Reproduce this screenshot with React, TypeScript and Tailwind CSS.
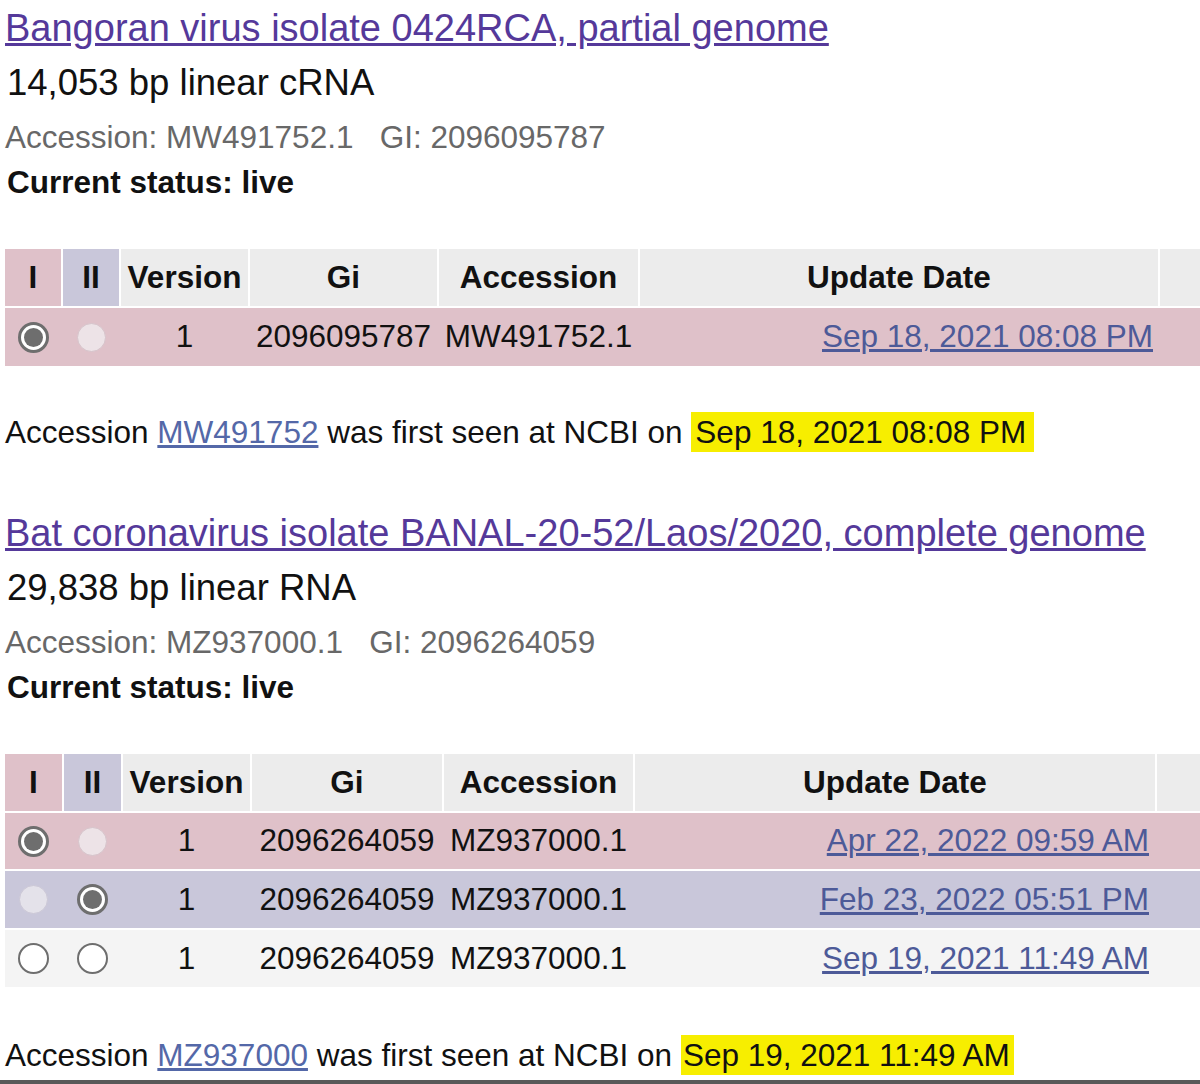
import React from "react";

type RadioKind = "on" | "off" | "dim" | "dimBlue";

const Radio = ({ kind }: { kind: RadioKind }) => {
    if (kind === "on") {
        return (
            <span className="w-[31px] h-[31px] rounded-full border-[3px] border-[#6e6e6e] bg-white flex items-center justify-center">
                <span className="w-[19px] h-[19px] rounded-full bg-[#6e6e6e]" />
            </span>
        );
    }
    if (kind === "dim") {
        return <span className="w-[29px] h-[29px] rounded-full bg-[#ede3e7] border border-[#d6c3ca]" />;
    }
    if (kind === "dimBlue") {
        return <span className="w-[29px] h-[29px] rounded-full bg-[#e4e2ea] border border-[#cbc7d6]" />;
    }
    return <span className="w-[31px] h-[31px] rounded-full border-2 border-[#6e6e6e] bg-white" />;
};

type Row = {
    bg: string;
    r1: RadioKind;
    r2: RadioKind;
    gi: string;
    acc: string;
    date: string;
    h: string;
};

const Table = ({ cols, rows, datePr }: { cols: string; rows: Row[]; datePr: string }) => {
    return (
        <div className="flex flex-col gap-y-[2px] w-[1300px] ml-[5px]">
            {/* header */}
            <div className={`grid ${cols} gap-x-[2px] h-[57px] font-bold text-[31.5px]`}>
                <div className="bg-[#dfc1c9] flex items-center justify-center">I</div>
                <div className="bg-[#c9c7da] flex items-center justify-center">II</div>
                <div className="bg-[#ececec] flex items-center justify-center">Version</div>
                <div className="bg-[#ececec] flex items-center justify-center">Gi</div>
                <div className="bg-[#ececec] flex items-center justify-center">Accession</div>
                <div className="bg-[#ececec] flex items-center justify-center">Update Date</div>
                <div className="bg-[#ececec]" />
            </div>

            {rows.map((r, i) => (
                <div key={i} className={`grid ${cols} gap-x-[2px] ${r.h} ${r.bg} text-[31.5px]`}>
                    <div className={`${r.bg} flex items-center justify-center`}>
                        <Radio kind={r.r1} />
                    </div>
                    <div className={`${r.bg} flex items-center justify-center`}>
                        <Radio kind={r.r2} />
                    </div>
                    <div className={`${r.bg} flex items-center justify-center`}>1</div>
                    <div className={`${r.bg} flex items-center justify-center`}>{r.gi}</div>
                    <div className={`${r.bg} flex items-center justify-center`}>{r.acc}</div>
                    <div className={`${r.bg} flex items-center justify-end ${datePr}`}>
                        <a href="#" className="text-[#4d5a98] underline">{r.date}</a>
                    </div>
                    <div className={r.bg} />
                </div>
            ))}
        </div>
    );
};

const Entry = ({
    title,
    desc,
    acc,
    gi,
}: {
    title: string;
    desc: string;
    acc: string;
    gi: string;
}) => (
    <div className="pl-[5px]">
        <a href="#" className="block leading-[56px] text-[38px] text-[#55399a] underline">
            {title}
        </a>
        <div className="leading-[54px] text-[36.5px] pl-[2px]">{desc}</div>
        <div className="leading-[54px] text-[31.5px] text-[#686868]">
            Accession: {acc}&nbsp;&nbsp;&nbsp;GI: {gi}
        </div>
        <div className="leading-[36px] text-[31.5px] font-bold pl-[2px]">Current status: live</div>
    </div>
);

const App = () => {
    return (
        <div className="w-[1200px] h-[1084px] overflow-hidden bg-white text-[#111] font-['Liberation_Sans',Arial,sans-serif] relative">

            <Entry
                title="Bangoran virus isolate 0424RCA, partial genome"
                desc="14,053 bp linear cRNA"
                acc="MW491752.1"
                gi="2096095787"
            />

            <div className="mt-[49px]">
                <Table
                    cols="grid-cols-[56px_56px_127px_187px_199px_518px_120px]"
                    datePr="pr-[5px]"
                    rows={[
                        { bg: "bg-[#dfc1c9]", r1: "on", r2: "dim", gi: "2096095787", acc: "MW491752.1", date: "Sep 18, 2021 08:08 PM", h: "h-[58px]" },
                    ]}
                />
            </div>

            <div className="mt-[46px] pl-[5px] leading-[40px] text-[31.5px]">
                Accession{" "}
                <a href="#" className="text-[#5468a8] underline">MW491752</a>{" "}
                was first seen at NCBI on{" "}
                <span className="bg-[#f7ee00] pl-[4px] pr-[8px] py-[2px]">Sep 18, 2021 08:08 PM</span>
            </div>

            <div className="mt-[53px]">
                <Entry
                    title="Bat coronavirus isolate BANAL-20-52/Laos/2020, complete genome"
                    desc="29,838 bp linear RNA"
                    acc="MZ937000.1"
                    gi="2096264059"
                />
            </div>

            <div className="mt-[49px]">
                <Table
                    cols="grid-cols-[57px_57px_127px_190px_189px_520px_120px]"
                    datePr="pr-[6px]"
                    rows={[
                        { bg: "bg-[#dfc1c9]", r1: "on", r2: "dim", gi: "2096264059", acc: "MZ937000.1", date: "Apr 22, 2022 09:59 AM", h: "h-[56px]" },
                        { bg: "bg-[#c9c7da]", r1: "dimBlue", r2: "on", gi: "2096264059", acc: "MZ937000.1", date: "Feb 23, 2022 05:51 PM", h: "h-[57px]" },
                        { bg: "bg-[#f4f4f4]", r1: "off", r2: "off", gi: "2096264059", acc: "MZ937000.1", date: "Sep 19, 2021 11:49 AM", h: "h-[57px]" },
                    ]}
                />
            </div>

            <div className="mt-[48px] pl-[5px] leading-[40px] text-[31.5px]">
                Accession{" "}
                <a href="#" className="text-[#5468a8] underline">MZ937000</a>{" "}
                was first seen at NCBI on{" "}
                <span className="bg-[#f7ee00] pl-[2px] pr-[4px] py-[2px]">Sep 19, 2021 11:49 AM</span>
            </div>

            {/* bottom edge */}
            <div className="absolute left-0 right-0 bottom-0 h-[4px] bg-[#595959]" />
        </div>
    );
};

export default App;
